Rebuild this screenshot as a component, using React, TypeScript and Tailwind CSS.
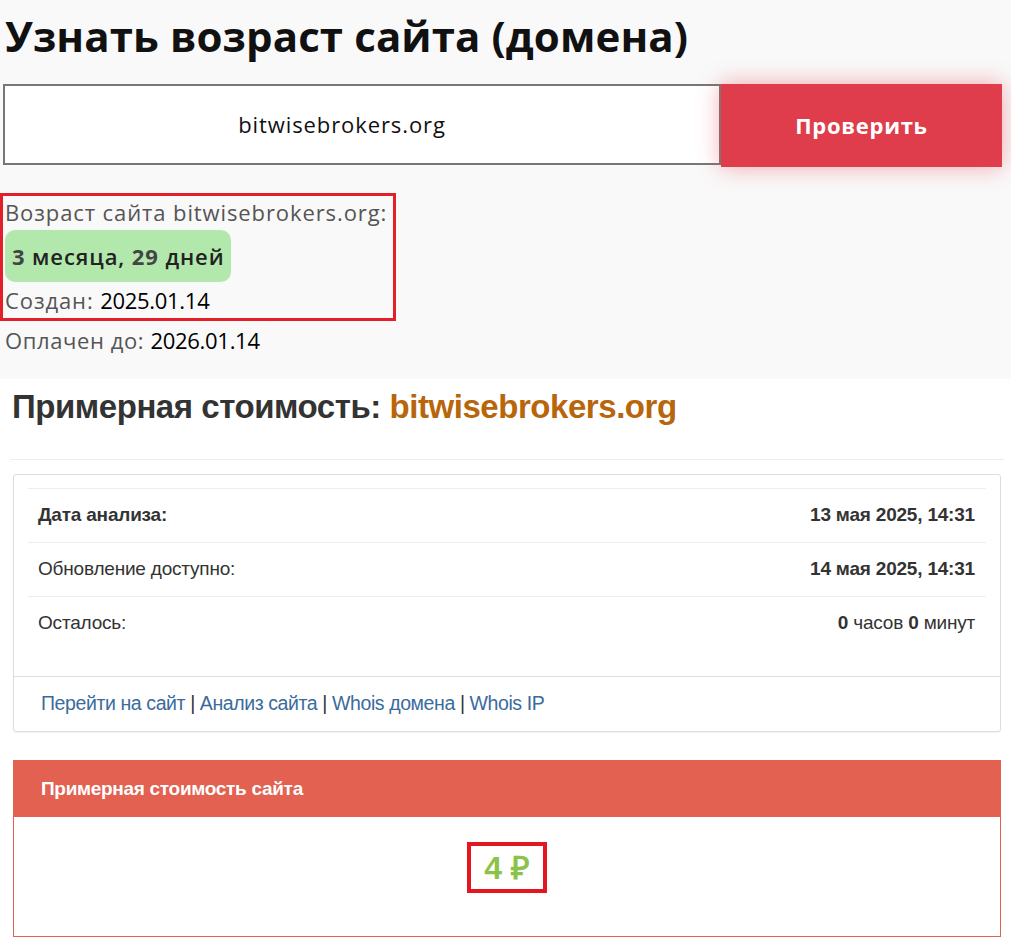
import React from "react";

const rows = [
  { label: "Дата анализа:", bold: true, value: <b>13 мая 2025, 14:31</b> },
  { label: "Обновление доступно:", bold: false, value: <b>14 мая 2025, 14:31</b> },
  {
    label: "Осталось:",
    bold: false,
    value: (
      <>
        <b>0</b> часов <b>0</b> минут
      </>
    ),
  },
];

const links = ["Перейти на сайт", "Анализ сайта", "Whois домена", "Whois IP"];

export default function App() {
  return (
    <div className="min-h-[942px] bg-white">
      {/* age checker */}
      <section className="bg-[#f9f9f9] pb-[20px] pl-[3px] pr-[9px] pt-[12px] font-['Open_Sans',sans-serif]">
        <h1 className="pl-[2px] text-[42px] font-bold leading-[48px] tracking-[0.1px] text-[#111]">
          Узнать возраст сайта (домена)
        </h1>
        <div className="mt-[24px] flex items-start">
          <div className="flex h-[81px] flex-1 items-center justify-center border-2 border-[#777] bg-white pr-[40px] text-[22px] font-normal tracking-[0.9px] text-[#111]">
            bitwisebrokers.org
          </div>
          <button className="h-[83px] w-[281px] bg-[#df3d4b] text-[22px] font-bold tracking-[0.7px] text-white shadow-[0_0_22px_rgba(232,64,78,0.45)]">
            Проверить
          </button>
        </div>

        <div className="-ml-[3px] mt-[26px] w-[396px] border-[3px] border-[#e3202a] pl-[2px] text-[22px] tracking-[0.9px] text-[#555]">
          <div className="h-[32px] leading-[32px]">Возраст сайта bitwisebrokers.org:</div>
          <div className="mt-[2px] inline-flex h-[52px] items-center rounded-[10px] bg-[#b3e8ad] px-[7px] text-[22px] font-semibold tracking-[0.9px] text-[#222]">
            <span className="font-bold text-[#444]">3</span>&nbsp;месяца,&nbsp;
            <span className="font-bold text-[#444]">29</span>&nbsp;дней
          </div>
          <div className="h-[36px] leading-[36px]">
            Создан: <span className="tracking-[-0.3px] text-black">2025.01.14</span>
          </div>
        </div>
        <div className="h-[38px] pl-[2px] text-[22px] leading-[38px] tracking-[0.6px] text-[#555]">
          Оплачен до: <span className="tracking-[-0.3px] text-black">2026.01.14</span>
        </div>
      </section>

      {/* estimated cost */}
      <section className="pl-[10px] pr-[7px] pt-[8px] font-['Liberation_Sans',Arial,sans-serif] text-[#333]">
        <h2 className="px-[2px] text-[33px] font-bold leading-[40px] tracking-[-0.45px] text-[#333]">
          Примерная стоимость: <span className="text-[#b8660b]">bitwisebrokers.org</span>
        </h2>
        <hr className="mt-[32px] border-t border-[#eee]" />

        <div className="mx-[3px] mt-[14px] rounded-[3px] border border-[#ddd] bg-white shadow-[0_1px_1px_rgba(0,0,0,0.05)]">
          <div className="px-[14px] pb-[26px] pt-[13px]">
            {rows.map((r, i) => (
              <div
                key={i}
                className={`flex h-[54px] items-center justify-between border-t border-[#eee] pl-[10px] pr-[11px] text-[19px] tracking-[-0.2px] ${
                  r.bold ? "font-bold" : "font-normal"
                }`}
              >
                <span>{r.label}</span>
                <span className="font-normal">{r.value}</span>
              </div>
            ))}
          </div>
          <div className="flex h-[55px] items-center border-t border-[#ddd] px-[27px] text-[19.5px] tracking-[-0.4px] text-[#3a6b9d]">
            {links.map((l, i) => (
              <React.Fragment key={l}>
                {i > 0 && <span className="px-[5px] text-[#333]">|</span>}
                <a href="#" className="hover:underline">
                  {l}
                </a>
              </React.Fragment>
            ))}
          </div>
        </div>

        <div className="mx-[3px] mt-[28px] border border-[#e26150]">
          <div className="flex h-[56px] items-center bg-[#e26150] px-[27px] text-[19px] font-bold tracking-[-0.3px] text-white">
            Примерная стоимость сайта
          </div>
          <div className="flex h-[119px] justify-center pt-[25px]">
            <div className="flex h-[51px] w-[80px] items-center justify-center border-[4px] border-[#e4161f] text-[32px] font-bold text-[#8bc34a]">
              4 ₽
            </div>
          </div>
        </div>
      </section>
    </div>
  );
}
